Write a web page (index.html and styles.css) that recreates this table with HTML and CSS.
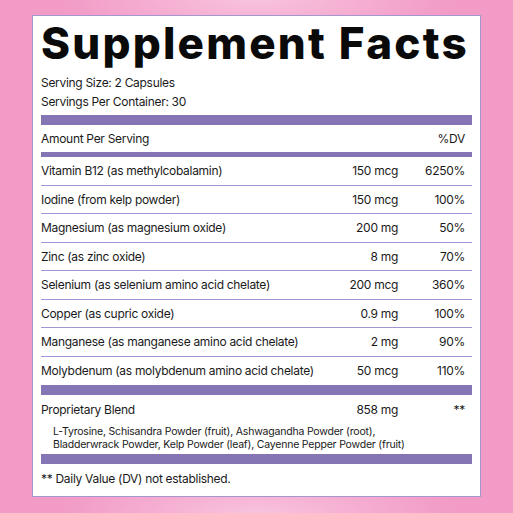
FILE: index.html
```html
<!DOCTYPE html>
<html>

<head>
  <meta charset="UTF-8">
  <title>Supplement Facts</title>
  <link rel="stylesheet" href="styles.css">
</head>

<body>
  <div class="label">
    <h1 class="title">Supplement Facts</h1>
    <div class="serving">Serving Size: 2 Capsules</div>
    <div class="serving">Servings Per Container: 30</div>
    <div class="bar thick"></div>
    <div class="row head">
      <span class="name">Amount Per Serving</span>
      <span class="amt"></span>
      <span class="dv">%DV</span>
    </div>
    <div class="bar mid"></div>
    <div class="row">
      <span class="name">Vitamin B12 (as methylcobalamin)</span>
      <span class="amt">150 mcg</span>
      <span class="dv">6250%</span>
    </div>
    <div class="row">
      <span class="name">Iodine (from kelp powder)</span>
      <span class="amt">150 mcg</span>
      <span class="dv">100%</span>
    </div>
    <div class="row">
      <span class="name">Magnesium (as magnesium oxide)</span>
      <span class="amt">200 mg</span>
      <span class="dv">50%</span>
    </div>
    <div class="row">
      <span class="name">Zinc (as zinc oxide)</span>
      <span class="amt">8 mg</span>
      <span class="dv">70%</span>
    </div>
    <div class="row">
      <span class="name">Selenium (as selenium amino acid chelate)</span>
      <span class="amt">200 mcg</span>
      <span class="dv">360%</span>
    </div>
    <div class="row">
      <span class="name">Copper (as cupric oxide)</span>
      <span class="amt">0.9 mg</span>
      <span class="dv">100%</span>
    </div>
    <div class="row">
      <span class="name">Manganese (as manganese amino acid chelate)</span>
      <span class="amt">2 mg</span>
      <span class="dv">90%</span>
    </div>
    <div class="row last">
      <span class="name">Molybdenum (as molybdenum amino acid chelate)</span>
      <span class="amt">50 mcg</span>
      <span class="dv">110%</span>
    </div>
    <div class="bar thick"></div>
    <div class="blend">
      <div class="row plain">
        <span class="name">Proprietary Blend</span>
        <span class="amt">858 mg</span>
        <span class="dv">**</span>
      </div>
      <p class="ingredients">L-Tyrosine, Schisandra Powder (fruit), Ashwagandha Powder (root),<br>Bladderwrack Powder, Kelp Powder (leaf), Cayenne Pepper Powder (fruit)</p>
    </div>
    <div class="bar thick"></div>
    <div class="note">** Daily Value (DV) not established.</div>
  </div>
</body>

</html>
```

FILE: styles.css
```css
body {
  margin: 0;
  width: 513px;
  height: 513px;
  overflow: hidden;
  background: radial-gradient(ellipse 200px 45px at 50% 0, #f8c3dd, rgba(243, 154, 197, 0)),
    radial-gradient(ellipse 200px 45px at 50% 100%, #f8c3dd, rgba(243, 154, 197, 0)),
    #f29bc6;
  font-family: "Inter", "Liberation Sans", sans-serif;
  color: #1a1a1a;
  padding-top: 15px;
  box-sizing: border-box;
}

.label {
  margin-left: 32px;
  width: 449px;
  height: 482px;
  box-sizing: border-box;
  background: #fff;
  border: 1px solid #a696d2;
  padding: 0 8px;
}

.title {
  margin: 0;
  height: 54px;
  font-size: 44px;
  font-weight: 800;
  line-height: 54px;
  letter-spacing: 2.2px;
  color: #0a0a0a;
  white-space: nowrap;
}

.serving {
  font-size: 12px;
  height: 19px;
  line-height: 19px;
  letter-spacing: -0.3px;
}

.serving:first-of-type {
  margin-top: 3px;
}

.bar {
  background: #8575b5;
}

.thick {
  height: 10px;
  margin-top: 4px;
}

.mid {
  height: 5px;
}

.row {
  display: flex;
  align-items: center;
  height: 28.5px;
  padding-right: 7px;
  font-size: 12px;
  letter-spacing: -0.3px;
  border-bottom: 1.5px solid #a395d4;
  box-sizing: border-box;
}

.row.head,
.row.last,
.row.plain {
  border-bottom: none;
}

.row.head {
  height: 27px;
}

.row .name {
  flex: 1;
  white-space: nowrap;
}

.row .amt {
  width: 80px;
  text-align: right;
}

.row .dv {
  width: 67px;
  text-align: right;
}

.row.last + .bar {
  margin-top: 0;
}

.blend .row.plain {
  height: 28px;
}

.ingredients {
  margin: 2px 0 0 12px;
  font-size: 10.5px;
  line-height: 13px;
  letter-spacing: -0.2px;
}

.blend + .bar {
  margin-top: 3px;
}

.note {
  font-size: 12px;
  height: 30px;
  line-height: 30px;
  letter-spacing: -0.3px;
}
```
